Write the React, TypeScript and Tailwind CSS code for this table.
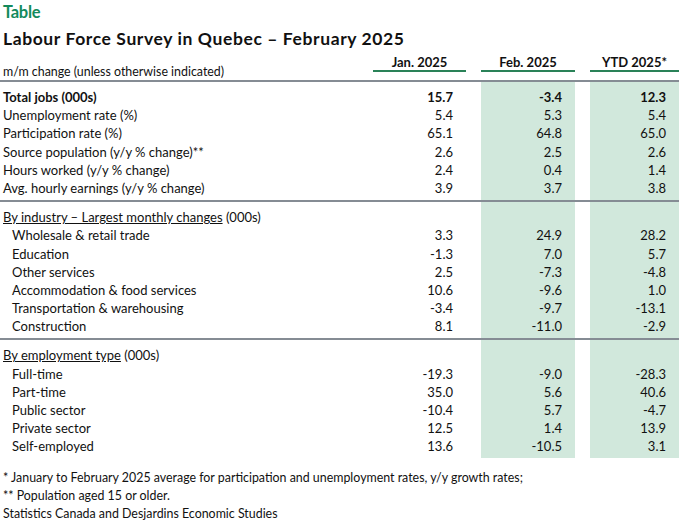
import React from "react";

type Row = { label: string; v: [string, string, string]; bold?: boolean; indent?: boolean };

const sec1: Row[] = [
  { label: "Total jobs (000s)", v: ["15.7", "-3.4", "12.3"], bold: true },
  { label: "Unemployment rate (%)", v: ["5.4", "5.3", "5.4"] },
  { label: "Participation rate (%)", v: ["65.1", "64.8", "65.0"] },
  { label: "Source population (y/y % change)**", v: ["2.6", "2.5", "2.6"] },
  { label: "Hours worked (y/y % change)", v: ["2.4", "0.4", "1.4"] },
  { label: "Avg. hourly earnings (y/y % change)", v: ["3.9", "3.7", "3.8"] },
];

const sec2: Row[] = [
  { label: "Wholesale & retail trade", v: ["3.3", "24.9", "28.2"], indent: true },
  { label: "Education", v: ["-1.3", "7.0", "5.7"], indent: true },
  { label: "Other services", v: ["2.5", "-7.3", "-4.8"], indent: true },
  { label: "Accommodation & food services", v: ["10.6", "-9.6", "1.0"], indent: true },
  { label: "Transportation & warehousing", v: ["-3.4", "-9.7", "-13.1"], indent: true },
  { label: "Construction", v: ["8.1", "-11.0", "-2.9"], indent: true },
];

const sec3: Row[] = [
  { label: "Full-time", v: ["-19.3", "-9.0", "-28.3"], indent: true },
  { label: "Part-time", v: ["35.0", "5.6", "40.6"], indent: true },
  { label: "Public sector", v: ["-10.4", "5.7", "-4.7"], indent: true },
  { label: "Private sector", v: ["12.5", "1.4", "13.9"], indent: true },
  { label: "Self-employed", v: ["13.6", "-10.5", "3.1"], indent: true },
];

function Section({ header, rows, last }: { header?: React.ReactNode; rows: Row[]; last?: boolean }) {
  const cell = "h-[18.2px] leading-[18.2px] whitespace-nowrap";
  return (
    <div className="flex border-t-2 border-[#858c94]">
      <div className={`w-[373px] pt-[6px] ${last ? "pb-[2px]" : "pb-[3px]"}`}>
        {header && <div className={`${cell} pl-[3px]`}>{header}</div>}
        {rows.map((r, i) => (
          <div key={i} className={`${cell} ${r.indent ? "pl-[12px]" : "pl-[3px]"} ${r.bold ? "font-bold" : ""}`}>
            {r.label}
          </div>
        ))}
      </div>
      {[0, 1, 2].map((c) => (
        <React.Fragment key={c}>
          {c > 0 && <div className="w-[15px]" />}
          <div
            className={`${c === 0 ? "w-[93px]" : c === 1 ? "w-[94px] bg-[#d1e8dc]" : "w-[89px] bg-[#d1e8dc]"} pt-[6px] pr-[13px] text-right`}
          >
            {header && <div className={cell} />}
            {rows.map((r, i) => (
              <div key={i} className={`${cell} ${r.bold ? "font-bold" : ""}`}>
                {r.v[c]}
              </div>
            ))}
          </div>
        </React.Fragment>
      ))}
    </div>
  );
}

export default function App() {
  return (
    <div
      className="w-[679px] h-[525px] bg-white text-[#111] text-[13px] overflow-hidden"
      style={{ fontFamily: "Lato, 'Open Sans', sans-serif" }}
    >
      <div className="pt-[2px] pl-[3px] h-[22px] leading-[20px] text-[16.5px] tracking-[-0.3px] font-bold text-[#138a5c]">
        Table
      </div>
      <div className="mt-[7px] pl-[3px] h-[20px] leading-[20px] text-[17.5px] tracking-[0.6px] font-bold whitespace-nowrap">
        Labour Force Survey in Quebec – February 2025
      </div>
      <div className="flex h-[31px]">
        <div className="w-[373px] pl-[3px] flex items-end">
          <div className="leading-[16px] text-[12.4px] whitespace-nowrap">m/m change (unless otherwise indicated)</div>
        </div>
        {["Jan. 2025", "Feb. 2025", "YTD 2025*"].map((h, i) => (
          <React.Fragment key={h}>
            {i > 0 && <div className="w-[15px]" />}
            <div className={`${i === 0 ? "w-[93px]" : i === 1 ? "w-[94px]" : "w-[89px]"} flex flex-col justify-end pb-[8px]`}>
              <div className="leading-[16px] text-center font-bold">{h}</div>
              <div className="h-[2px] bg-[#2a8258]" />
            </div>
          </React.Fragment>
        ))}
      </div>
      <Section rows={sec1} />
      <Section
        header={
          <span>
            <span className="underline">By industry – Largest monthly changes</span> (000s)
          </span>
        }
        rows={sec2}
      />
      <Section
        header={
          <span>
            <span className="underline">By employment type</span> (000s)
          </span>
        }
        rows={sec3}
        last
      />
      <div className="mt-[11px] pl-[3px] text-[12.4px]">
        <div className="h-[18.2px] leading-[18.2px] whitespace-nowrap">
          * January to February 2025 average for participation and unemployment rates, y/y growth rates;
        </div>
        <div className="h-[18.2px] leading-[18.2px]">** Population aged 15 or older.</div>
        <div className="h-[18.2px] leading-[18.2px]">Statistics Canada and Desjardins Economic Studies</div>
      </div>
    </div>
  );
}
